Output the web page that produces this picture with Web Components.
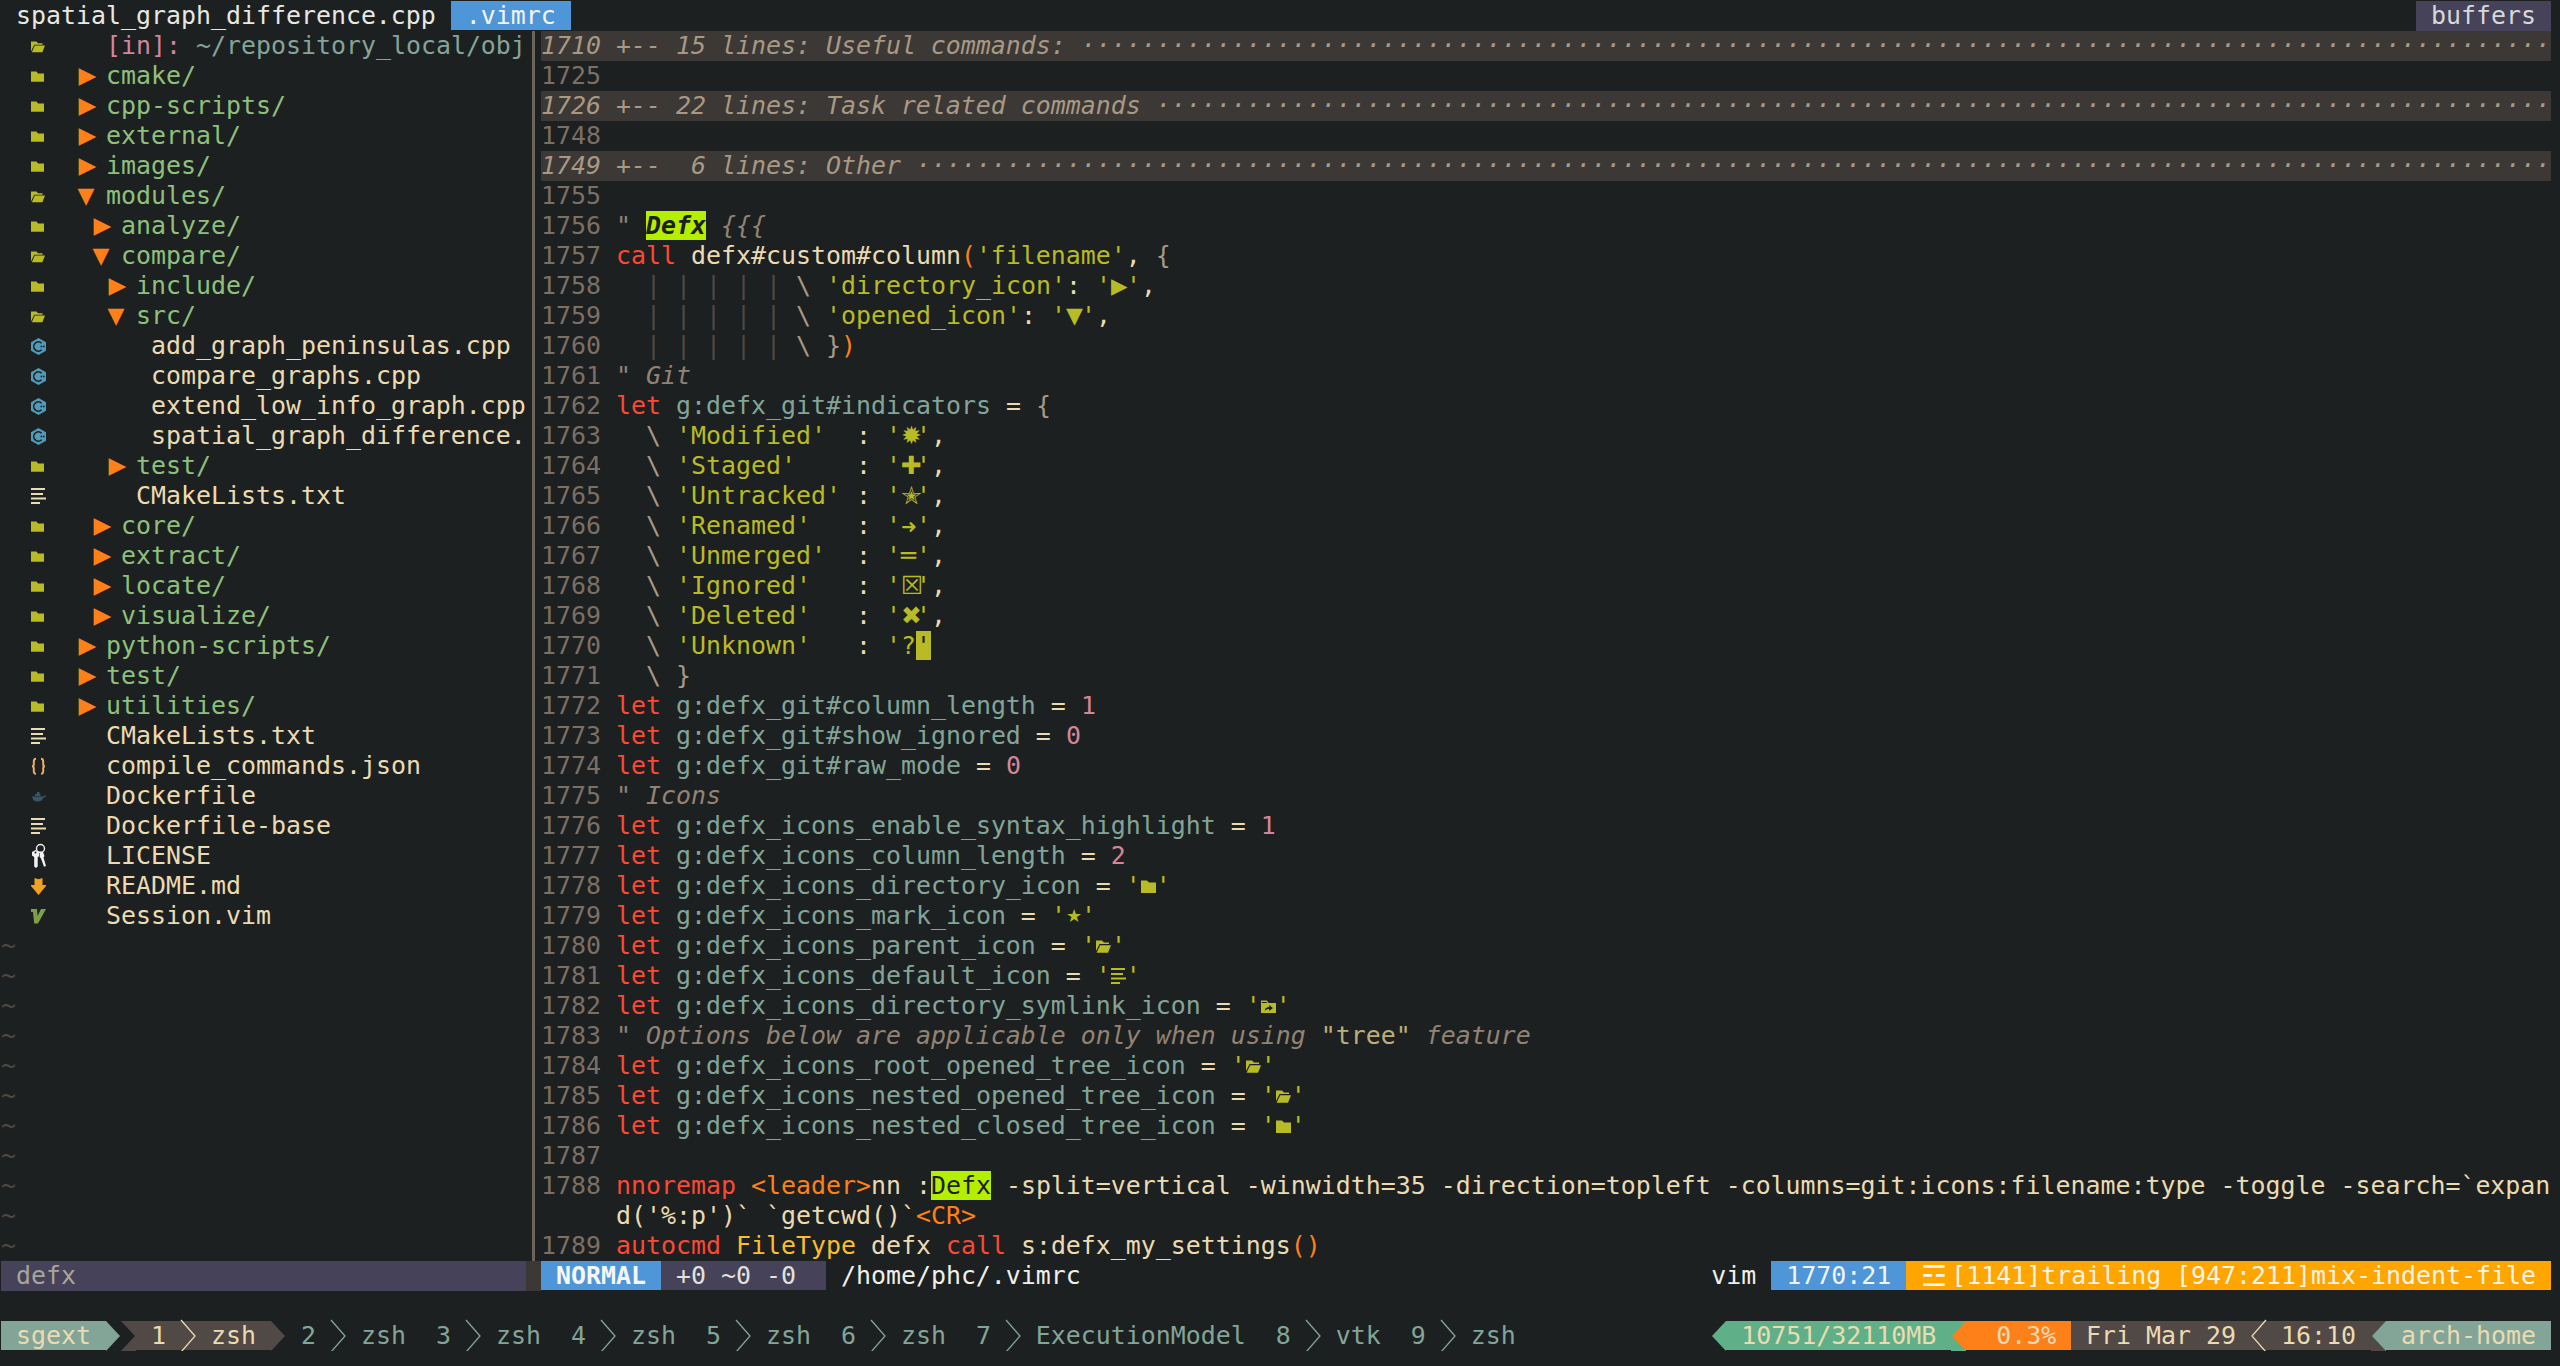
<!DOCTYPE html>
<html><head><meta charset="utf-8"><title>vim</title>
<style>
html,body{margin:0;background:#1d2021;}
body{font:24.915px/30px "DejaVu Sans Mono","DejaVu Sans",monospace;color:#ebdbb2;}
</style></head>
<body>
<tmux-screen>
  <vim-tabline></vim-tabline>
  <vim-panes>
    <vim-tree></vim-tree>
    <vim-code></vim-code>
  </vim-panes>
  <vim-status></vim-status>
  <tmux-bar></tmux-bar>
</tmux-screen>
<script>
const BLUE='#519aba',OL='#b8bb26',FG='#ebdbb2';
const svg=(inner,w=15)=>`<svg class="ic" width="${w}" height="30" viewBox="0 0 ${w} 30" aria-hidden="true">${inner}</svg>`;
const linesIcon=c=>svg(`<g fill="${c}"><rect x="0" y="7" width="14" height="2"/><rect x="0" y="12" width="12" height="2"/><rect x="0" y="16.5" width="15" height="2"/><rect x="0" y="21" width="9" height="2"/></g>`);
const ICONS={
 tclosed:svg(`<path fill="${OL}" d="M0 10.5h5.5l1.5 2h6V21H0z"/><path fill="#8f9120" d="M0 20h13v1H0z"/>`),
 topen:svg(`<path fill="${OL}" d="M0 10.5h5.5l1.5 1.8h4.5v1.4H3.2L0 20.5z"/><path fill="${OL}" d="M3.8 14.6H14l-2.6 6.7H.8z"/>`),
 closed:svg(`<path fill="${OL}" d="M0 9.5h6l2 2h7V22H0z"/>`),
 open:svg(`<path fill="${OL}" d="M0 9.5h6l2 2h5v1.6H3.5L0 20z"/><path fill="${OL}" d="M4.2 14.2H15l-3 7.6H.6z"/>`),
 symlink:svg(`<path fill="${OL}" d="M0 9.5h6l1.6 2.5H15v10H0z"/><path fill="none" stroke="#1d2021" stroke-width="1" d="M.8 11.5h5"/><path fill="#1d2021" d="M3.5 20c.4-2.6 2.2-4 4.7-4v-2l3.8 3-3.8 3v-2c-2 0-3.4.6-4.7 2z"/>`),
 lines:linesIcon(OL),
 file:linesIcon(FG),
 cpp:svg(`<polygon fill="${BLUE}" points="7.5,7 15,11.2 15,19.8 7.5,24 0,19.8 0,11.2"/><path fill="none" stroke="#1d2021" stroke-width="1.6" d="M10.6 12.2A4.6 4.6 0 1 0 10.6 18.8"/><rect x="9.6" y="14.7" width="1.6" height="1.6" fill="#1d2021"/><rect x="12" y="14.7" width="1.6" height="1.6" fill="#1d2021"/>`),
 json:svg(`<g fill="none" stroke="#e8b060" stroke-width="2"><path d="M5 7.8c-2 0-2.2 1-2.2 3v2.6c0 1-.6 1.900-1.800 1.900 1.200 0 1.800.9 1.800 1.900V20c0 2 .2 2.800 2.200 2.800"/><path d="M10 7.800c2 0 2.200 1 2.200 3v2.600c0 1 .6 1.900 1.800 1.900-1.200 0-1.800.9-1.800 1.900V20c0 2-.2 2.800-2.200 2.800"/></g>`),
 docker:svg(`<g fill="#35566b"><path d="M1 15.5h11.5c0 2.8-2.3 5-6 5-3.200 0-4.900-2-5.500-5z"/><rect x="4" y="13" width="5.500" height="2"/><rect x="6" y="11" width="2.500" height="2"/><path d="M12 15.500c.8-1 2-1.300 3.200-.7-.6 1.200-1.700 1.700-3 1.500z"/></g>`),
 key:svg(`<circle cx="9.500" cy="7.500" r="4" fill="none" stroke="#f2f2f2" stroke-width="1.400"/><g fill="#f2f2f2"><path d="M1 11l3.500-2 3.500 2v4l-1.300 1.500v9L5 27l-1.800-1.600V16L1 14.500z"/><path d="M8.500 10.500l3.500.5 1.500 4-1 1.500 2.500 8.500-2 .8-3-8.300-1.300-1.500z"/></g><circle cx="4.500" cy="11.500" r="1" fill="#1d2021"/>`),
 md:svg(`<polygon fill="#f4a020" points="3.500,7 7.500,8.200 11.500,7 11.500,14 15,14 15,15 7.500,24 0,15 0,14 3.500,14"/>`),
 vim:svg(`<polygon fill="#7e9f4a" points="0,8 6,8 6.500,15 10,8 15,8 7,22.500 3.200,22.500 2,11 0,11"/>`),
};
const esc=s=>s.replace(/&/g,'&amp;').replace(/</g,'&lt;').replace(/>/g,'&gt;');
function render(m){
  let out='',i=0;const re=/⟦(\w+)\|([^⟧]*)⟧/g;let x;
  while((x=re.exec(m))){
    out+=esc(m.slice(i,x.index));i=re.lastIndex;
    if(x[1]==='i')out+=ICONS[x[2]];
    else if(x[1].startsWith('g'))out+=`<span class="g ${x[1]}">${esc(x[2])}</span>`;
    else out+=`<span class="${x[1]}">${esc(x[2])}</span>`;
  }
  return out+esc(m.slice(i));
}
const BASE=`*{box-sizing:border-box}
.row{display:block;height:30px;line-height:30px;white-space:pre;}
.ic{display:inline-block;vertical-align:top;overflow:visible}
.k{color:#fb4934}.v{color:#83a598}.s{color:#b8bb26}.n{color:#d3869b}.c{color:#928374;font-style:italic}
.p{color:#fe8019}.t{color:#a89984}.ind{color:#504945}.y{color:#fabd2f}.q{color:#bdae7a}
.hl{background:#b4ee00;color:#1d2021;font-weight:bold;font-style:italic}
.hm{background:#b4ee00;color:#1d2021}
.cur{background:#b8bb26;color:#1d2021}
.g{display:inline-block;width:15px;text-align:center;color:#b8bb26;font-family:"DejaVu Sans";vertical-align:top;line-height:30px;white-space:nowrap}
.gtri{font-size:21.5px}.gdown{font-size:22px}.garrow{font-size:19px}.gstar{font-size:18px}.gdbl{font-weight:bold}
.ar,.ad{display:inline-block;width:15px;color:#fe8019;font-family:"DejaVu Sans";vertical-align:top;text-align:left;white-space:nowrap}
.ar{font-size:23px;line-height:28px;text-indent:2.5px}
.ad{font-size:22px;line-height:30px;text-indent:1.5px}
.d{color:#8ec07c}.f{color:#ebdbb2}.pk{color:#d3869b}
`;
class Base extends HTMLElement{
  constructor(){super();this.attachShadow({mode:'open'});}
}
customElements.define('tmux-screen',class extends Base{
  connectedCallback(){this.shadowRoot.innerHTML=`<style>
  :host{display:grid;grid-template-rows:30px 1230px 30px 30px 30px;row-gap:0;width:2550px;padding:1px 0 0 1px;box-sizing:content-box}
  ::slotted(tmux-bar){grid-row:5}
  </style><slot></slot>`;}
});
customElements.define('vim-tabline',class extends Base{
  connectedCallback(){this.shadowRoot.innerHTML=`<style>${BASE}
  :host{display:flex;justify-content:space-between;height:30px;white-space:pre;color:#e8e8e2}
  .cur-tab{background:#4f96d8;color:#f4f4f4}
  .other{background:#45425a;color:#d8d8d8}
  </style><div><span> spatial_graph_difference.cpp </span><span class="cur-tab"> .vimrc </span></div><div class="other"> buffers </div>`;}
});
customElements.define('vim-panes',class extends Base{
  connectedCallback(){this.shadowRoot.innerHTML=`<style>
  :host{display:grid;grid-template-columns:525px 15px 1fr;height:1230px}
  .sep{display:flex;justify-content:center}
  .sep i{display:block;width:3px;background:#6b635a;margin-left:-1px}
  ::slotted(vim-code){grid-column:3;grid-row:1}
  ::slotted(vim-tree){grid-column:1;grid-row:1}
  </style><div class="sep" style="grid-column:2;grid-row:1"><i></i></div><slot></slot>`;}
});
const TREE=[
 ['topen','    ⟦pk|[in]:⟧ ⟦v|~/repository_local/obj⟧',1],
 ['tclosed',0,'cmake/'],['tclosed',0,'cpp-scripts/'],['tclosed',0,'external/'],['tclosed',0,'images/'],
 ['topen',0,'modules/','o'],['tclosed',1,'analyze/'],['topen',1,'compare/','o'],['tclosed',2,'include/'],['topen',2,'src/','o'],
 ['cpp',5,'add_graph_peninsulas.cpp'],['cpp',5,'compare_graphs.cpp'],['cpp',5,'extend_low_info_graph.cpp'],['cpp',5,'spatial_graph_difference.'],
 ['tclosed',2,'test/'],['file',4,'CMakeLists.txt'],
 ['tclosed',1,'core/'],['tclosed',1,'extract/'],['tclosed',1,'locate/'],['tclosed',1,'visualize/'],
 ['tclosed',0,'python-scripts/'],['tclosed',0,'test/'],['tclosed',0,'utilities/'],
 ['file',2,'CMakeLists.txt'],['json',2,'compile_commands.json'],['docker',2,'Dockerfile'],['file',2,'Dockerfile-base'],['key',2,'LICENSE'],['md',2,'README.md'],['vim',2,'Session.vim'],
];
customElements.define('vim-tree',class extends Base{
  connectedCallback(){
    let h='';
    for(const r of TREE){
      let m='  '+'⟦i|'+r[0]+'⟧';
      if(r[2]===1){m+=r[1];}
      else if(r[0]==='tclosed'||r[3]==='o'){
        m+='  '+' '.repeat(r[1])+(r[3]==='o'?'⟦ad|▼⟧':'⟦ar|▶⟧')+' ⟦d|'+r[2]+'⟧';
      }else{
        m+='  '+' '.repeat(r[1])+'⟦f|'+r[2]+'⟧';
      }
      h+=`<div class="row">${render(m)}</div>`;
    }
    for(let i=0;i<11;i++)h+=`<div class="row" style="color:#504945">~</div>`;
    this.shadowRoot.innerHTML=`<style>${BASE}:host{display:block;overflow:visible;min-width:0}</style>`+h;
  }
});
const q=(g,c='g')=>`⟦s|'⟧⟦${c}|${g}⟧⟦s|'⟧`;
const qi=(i)=>`⟦s|'⟧⟦i|${i}⟧⟦s|'⟧`;
const let_=(v,rest)=>`⟦k|let⟧ ⟦v|${v}⟧ = ${rest}`;
const bar='⟦ind|| | | | |⟧ ⟦t|\\⟧ ';
const CODE=[
 ['1710','F','+-- 15 lines: Useful commands: '],
 ['1725',''],
 ['1726','F','+-- 22 lines: Task related commands '],
 ['1748',''],
 ['1749','F','+--  6 lines: Other '],
 ['1755',''],
 ['1756','⟦c|" ⟧⟦hl|Defx⟧⟦c| {{{⟧'],
 ['1757',"⟦k|call⟧ defx#custom#column⟦p|(⟧⟦s|'filename'⟧, ⟦t|{⟧"],
 ['1758',"  "+bar+"⟦s|'directory_icon'⟧: "+q('▶','gtri')+","],
 ['1759',"  "+bar+"⟦s|'opened_icon'⟧: "+q('▼','gdown')+","],
 ['1760',"  "+bar+"⟦t|}⟧⟦p|)⟧"],
 ['1761','⟦c|" Git⟧'],
 ['1762',"⟦k|let⟧ ⟦v|g:defx_git#indicators⟧ = ⟦t|{⟧"],
 ['1763',"  ⟦t|\\⟧ ⟦s|'Modified'⟧  : "+q('✹')+","],
 ['1764',"  ⟦t|\\⟧ ⟦s|'Staged'⟧    : "+q('✚')+","],
 ['1765',"  ⟦t|\\⟧ ⟦s|'Untracked'⟧ : "+q('✭')+","],
 ['1766',"  ⟦t|\\⟧ ⟦s|'Renamed'⟧   : "+q('➜','garrow')+","],
 ['1767',"  ⟦t|\\⟧ ⟦s|'Unmerged'⟧  : "+q('═','gdbl')+","],
 ['1768',"  ⟦t|\\⟧ ⟦s|'Ignored'⟧   : "+q('☒')+","],
 ['1769',"  ⟦t|\\⟧ ⟦s|'Deleted'⟧   : "+q('✖')+","],
 ['1770',"  ⟦t|\\⟧ ⟦s|'Unknown'⟧   : ⟦s|'?⟧⟦cur|'⟧"],
 ['1771',"  ⟦t|\\⟧ ⟦t|}⟧"],
 ['1772',let_('g:defx_git#column_length','⟦n|1⟧')],
 ['1773',let_('g:defx_git#show_ignored','⟦n|0⟧')],
 ['1774',let_('g:defx_git#raw_mode','⟦n|0⟧')],
 ['1775','⟦c|" Icons⟧'],
 ['1776',let_('g:defx_icons_enable_syntax_highlight','⟦n|1⟧')],
 ['1777',let_('g:defx_icons_column_length','⟦n|2⟧')],
 ['1778',let_('g:defx_icons_directory_icon',qi('closed'))],
 ['1779',let_('g:defx_icons_mark_icon',q('★','gstar'))],
 ['1780',let_('g:defx_icons_parent_icon',qi('open'))],
 ['1781',let_('g:defx_icons_default_icon',qi('lines'))],
 ['1782',let_('g:defx_icons_directory_symlink_icon',qi('symlink'))],
 ['1783','⟦c|" Options below are applicable only when using ⟧⟦q|"tree"⟧⟦c| feature⟧'],
 ['1784',let_('g:defx_icons_root_opened_tree_icon',qi('open'))],
 ['1785',let_('g:defx_icons_nested_opened_tree_icon',qi('open'))],
 ['1786',let_('g:defx_icons_nested_closed_tree_icon',qi('closed'))],
 ['1787',''],
 ['1788',"⟦k|nnoremap⟧ ⟦p|<leader>⟧nn :⟦hm|Defx⟧ -split=vertical -winwidth=35 -direction=topleft -columns=git:icons:filename:type -toggle -search=`expan"],
 ['',"d('%:p')` `getcwd()`⟦p|<CR>⟧"],
 ['1789',"⟦k|autocmd⟧ ⟦y|FileType⟧ defx ⟦k|call⟧ s:defx_my_settings⟦p|()⟧"],
];
customElements.define('vim-code',class extends Base{
  connectedCallback(){
    let h='';
    for(const r of CODE){
      if(r[1]==='F'){
        const t=r[2]+'·'.repeat(129-r[2].length);
        h+=`<div class="row fold">${r[0]} ${t}</div>`;
      }else{
        h+=`<div class="row"><span class="num">${(r[0]||'').padEnd(5,' ')}</span>${render(r[1])}</div>`;
      }
    }
    this.shadowRoot.innerHTML=`<style>${BASE}
    :host{display:block;min-width:0}
    .num{color:#7c6f64}
    .fold{background:#3c3836;color:#a89984;font-style:italic}
    </style>`+h;
  }
});
customElements.define('vim-status',class extends Base{
  connectedCallback(){this.shadowRoot.innerHTML=`<style>${BASE}
  :host{display:flex;justify-content:space-between;height:30px;white-space:pre;color:#f0f0ea}
  .pu{background:#45425a;color:#e2e2dc}.nm{color:#a8a59c;background:#45425a;display:inline-block;width:525px}
  .gap{background:#3c3836;display:inline-block;width:15px;height:30px;vertical-align:top}
  .mode{background:#4f96d8;color:#f6f6f6;font-weight:bold}
  .pos{background:#4f96d8;color:#f4f4f4}
  .warn{background:#ffa500;color:#f8f4e8}
  .warn .g{color:inherit;font-size:29px;font-weight:bold;text-align:left}
  </style><div><span class="nm"> defx</span><span class="gap"></span><span class="mode"> NORMAL </span><span class="pu"> +0 ~0 -0  </span> /home/phc/.vimrc</div><div>vim <span class="pos"> 1770:21 </span><span class="warn"> <span class="g">☲</span> [1141]trailing [947:211]mix-indent-file </span></div>`;}
});
const A=(pts,fill,bg)=>`<svg class="ic" width="15" height="30" viewBox="0 0 15 30"${bg?` style="background:${bg}"`:''} aria-hidden="true"><polygon fill="${fill}" points="${pts}"/></svg>`;
const C=(pts,col)=>`<svg class="ic" width="15" height="30" viewBox="0 0 15 30" aria-hidden="true"><polyline fill="none" stroke="${col}" stroke-width="1.3" points="${pts}"/></svg>`;
const R='0,0 14,15 0,30',L='15,0 1,15 15,30';
const CR='0,-1 14,15 0,31',CL='15,-1 1,15 15,31';
const win=(n,t)=>`<span class="sg">${n} ${C(CR,'#83a598')} ${t}  </span>`;
customElements.define('tmux-bar',class extends Base{
  connectedCallback(){this.shadowRoot.innerHTML=`<style>${BASE}
  :host{display:flex;justify-content:space-between;height:30px;white-space:pre}
  .sage{background:#83a598;color:#ebdbb2}.br{background:#504945;color:#ebdbb2}
  .sg{color:#83a598}.gr{background:#5fb088;color:#ebdbb2}.or{background:#fe8019;color:#ebdbb2}
  </style><div><span class="sage"> sgext </span>${A(R,'#83a598')}${A('0,0 15,0 15,30 0,30 14,15','#504945')}<span class="br"> 1 ${C(CR,FG)} zsh </span>${A(R,'#504945')} ${win(2,'zsh')}${win(3,'zsh')}${win(4,'zsh')}${win(5,'zsh')}${win(6,'zsh')}${win(7,'ExecutionModel')}${win(8,'vtk')}<span class="sg">9 ${C(CR,'#83a598')} zsh</span></div>
  <div>${A(L,'#5fb088')}<span class="gr"> 10751/32110MB </span>${A(L,'#fe8019','#5fb088')}<span class="or">  0.3% </span><span class="br"> Fri Mar 29 ${C(CL,FG)} 16:10 </span>${A(L,'#83a598','#504945')}<span class="sage"> arch-home </span></div>`;}
});
</script>
</body></html>
